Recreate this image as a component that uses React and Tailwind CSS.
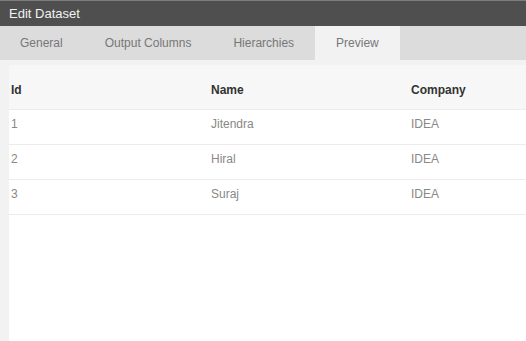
import React from 'react';

const tabs = ['General', 'Output Columns', 'Hierarchies', 'Preview'];

const rows = [
    { id: 1, name: 'Jitendra', company: 'IDEA' },
    { id: 2, name: 'Hiral', company: 'IDEA' },
    { id: 3, name: 'Suraj', company: 'IDEA' },
];

export default function App() {
    return (
        <div className="h-[341px] w-[526px] flex flex-col overflow-hidden font-['Liberation_Sans',Arial,sans-serif]">
            <header className="h-[26px] border-t border-[#7d7d7d] bg-[#4f4f4f] pl-[9px] text-[13px] leading-[25px] text-[#f2f2f2]">
                Edit Dataset
            </header>

            <nav className="h-[34px] flex bg-[#dcdcdc] text-[12px] text-[#777]">
                {tabs.map((tab, i) => (
                    <div
                        key={tab}
                        className={
                            'flex items-center ' +
                            (i === 0 ? 'pl-[20px] pr-[21px] ' : 'px-[21px] ') +
                            (tab === 'Preview' ? 'bg-[#f2f2f2]' : '')
                        }
                    >
                        {tab}
                    </div>
                ))}
            </nav>

            <main className="flex-1 flex flex-col bg-[#f2f2f2] pl-[9px] pt-[5px]">
                <div className="flex-1 bg-white text-[12px] leading-[14px]">
                    <div className="h-[45px] grid grid-cols-[200px_200px_1fr] border-b border-[#ececec] bg-[#f7f7f7] pt-[18px] pl-[2px] font-bold text-[#333]">
                        <div>Id</div>
                        <div>Name</div>
                        <div>Company</div>
                    </div>
                    {rows.map((row) => (
                        <div
                            key={row.id}
                            className="h-[35px] grid grid-cols-[200px_200px_1fr] border-b border-[#ececec] pt-[7px] pl-[2px] text-[#888]"
                        >
                            <div>{row.id}</div>
                            <div>{row.name}</div>
                            <div>{row.company}</div>
                        </div>
                    ))}
                </div>
            </main>
        </div>
    );
}
